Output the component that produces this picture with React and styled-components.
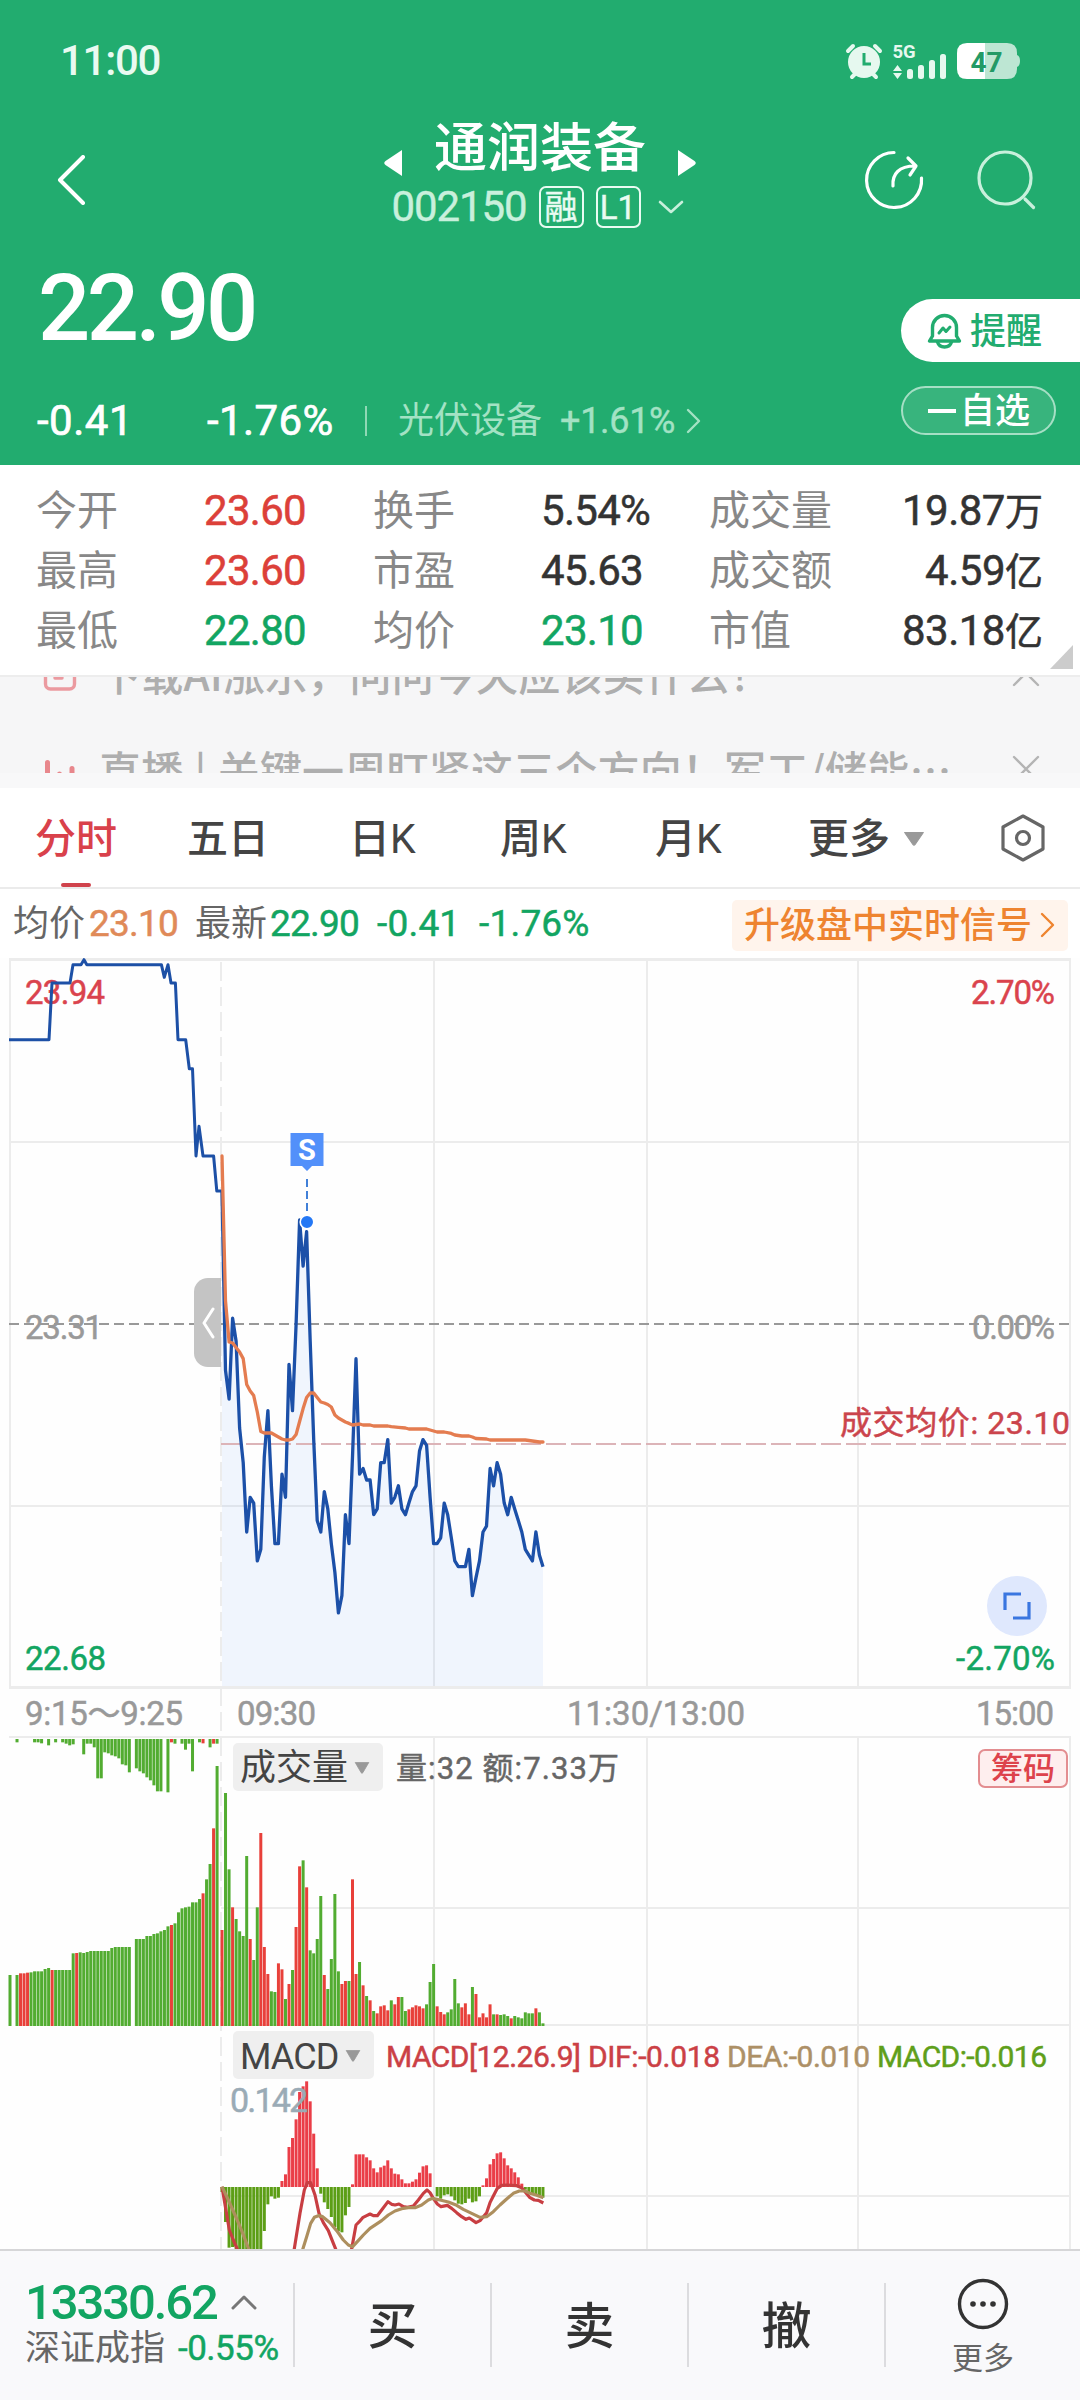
import React from "react";
import styled, { createGlobalStyle } from "styled-components";

const GREEN = "#22ac6f";
const UP = "#dc4039";
const DOWN = "#12a562";
const MINT = "#c8f0dc";

const GlobalStyle = createGlobalStyle`
  * { box-sizing: border-box; }
  body {
    margin: 0;
    background: #fff;
    font-family: Roboto, "Noto Sans CJK SC", sans-serif;
    line-height: 1;
    color: #333;
  }
  svg { display: block; flex: none; }
`;

const Screen = styled.div`
  width: 1080px;
  height: 2400px;
  display: flex;
  flex-direction: column;
  overflow: hidden;
  background: #fff;
`;

const Txt = styled.span`
  display: block;
  flex: none;
  white-space: nowrap;
  font-size: ${(p) => p.$size}px;
  font-weight: ${(p) => p.$weight || 400};
  letter-spacing: ${(p) => p.$ls || 0}px;
  color: ${(p) => p.$color || "inherit"};
  width: ${(p) => (p.$w ? p.$w + "px" : "auto")};
  padding-top: ${(p) => p.$drop || 0}px;
  padding-left: ${(p) => p.$indent || 0}px;
  -webkit-text-stroke: ${(p) => p.$ink || 0}px;
`;

/* ---------- header ---------- */

const Header = styled.header`
  flex: none;
  height: 465px;
  background: ${GREEN};
  color: #fff;
`;

const StatusBar = styled.div`
  height: 117px;
  padding: 5px 59px 0 60px;
  display: flex;
  align-items: center;
  justify-content: space-between;
`;

const StatusIcons = styled.div`
  display: flex;
  align-items: center;
`;

const Nav = styled.nav`
  height: 120px;
  padding: 0 44px 0 57px;
  display: grid;
  grid-template-columns: 200px 1fr 188px;
  align-items: center;
`;

const TitleBlock = styled.div`
  justify-self: center;
  margin-left: -25px;
  display: flex;
  flex-direction: column;
  align-items: center;
`;

const TitleRow = styled.div`
  height: 60px;
  width: 312px;
  padding-top: 4px;
  display: flex;
  align-items: center;
  justify-content: space-between;
`;

const CodeRow = styled.div`
  height: 60px;
  margin-left: -5px;
  display: flex;
  align-items: center;
`;

const Tag = styled.span`
  width: 45px;
  height: 42px;
  margin-left: ${(p) => p.$gap}px;
  border: 2px solid #e9fbf2;
  border-radius: 7px;
  display: flex;
  align-items: center;
  justify-content: center;
  font-size: ${(p) => p.$size}px;
  color: #e9fbf2;
  -webkit-text-stroke: 0.4px;
`;

const NavActions = styled.div`
  display: flex;
  justify-content: space-between;
  padding: 6px 0 0 16px;
`;

const Quote = styled.div`
  height: 228px;
  display: flex;
  justify-content: space-between;
`;

const QuoteLeft = styled.div`
  padding-left: 37px;
`;

const PriceRow = styled.div`
  height: 140px;
  padding-top: 4px;
  display: flex;
  align-items: center;
`;

const ChangeRow = styled.div`
  height: 86px;
  padding-top: 1px;
  display: flex;
  align-items: center;
`;

const Divider = styled.i`
  width: 2px;
  height: ${(p) => p.$h}px;
  background: ${(p) => p.$color};
`;

const QuoteRight = styled.div`
  width: 179px;
  padding-top: 62px;
`;

const AlertButton = styled.button`
  width: 179px;
  height: 63px;
  padding: 0 0 0 26px;
  border: 0;
  border-radius: 32px 0 0 32px;
  background: #fff;
  color: ${GREEN};
  font: inherit;
  display: flex;
  align-items: center;
  gap: 8px;
`;

const WatchButton = styled.button`
  width: 155px;
  height: 49px;
  margin-top: 24px;
  padding: 0 0 0 25px;
  border: 2px solid #a6dfc5;
  border-radius: 25px;
  background: #38b47d;
  color: #fff;
  font: inherit;
  display: flex;
  align-items: center;
  gap: 4px;
`;

const Minus = styled.i`
  width: 28px;
  height: 4px;
  background: #fff;
`;

/* ---------- stats ---------- */

const Stats = styled.section`
  flex: none;
  height: 210px;
  padding: 16px 0 0 36px;
  display: grid;
  grid-template-columns: 168px 169px 168px 168px 168px 166px;
  grid-template-rows: repeat(3, 60px);
  align-items: center;
`;

const StatLabel = styled.span`
  font-size: 41px;
  color: #888;
`;

const StatValue = styled.span`
  font-size: 42px;
  letter-spacing: ${(p) => (p.$right ? -0.5 : -0.7)}px;
  color: ${(p) => p.$color || "#333"};
  text-align: ${(p) => (p.$right ? "right" : "left")};
  -webkit-text-stroke: 0.5px;
  em { font-style: normal; font-size: 38px; letter-spacing: 0; }
`;

const CornerFold = styled.i`
  position: absolute;
  left: 1050px;
  top: 645px;
  border-left: 23px solid transparent;
  border-bottom: 24px solid #ccc;
`;

/* ---------- news ticker ---------- */

const News = styled.section`
  flex: none;
  height: 113px;
  background: #f8f8f9;
  border-top: 2px solid #ededed;
`;

const NewsClip = styled.div`
  height: 96px;
  overflow: hidden;
  background: #f6f6f7;
`;

const NewsRow = styled.div`
  height: 96px;
  margin-top: ${(p) => p.$shift || 0}px;
  padding: 0 40px 0 42px;
  display: flex;
  align-items: center;
  justify-content: space-between;
`;

const NewsText = styled.span`
  flex: 1;
  padding-left: 21px;
  font-family: "Noto Sans CJK SC", sans-serif;
  font-size: 42px;
  font-weight: 500;
  letter-spacing: 0.2px;
  word-spacing: 1.5px;
  color: #aeaeae;
  white-space: nowrap;
`;

/* ---------- tabs ---------- */

const Tabs = styled.nav`
  flex: none;
  height: 101px;
  padding: 0 33px 0 35px;
  border-bottom: 2px solid #ebebeb;
  display: flex;
`;

const Tab = styled.a`
  width: ${(p) => p.$w}px;
  height: 99px;
  padding-top: 3px;
  font-size: 41px;
  font-weight: 450;
  color: ${(p) => (p.$active ? "#d9414b" : "#444")};
  display: flex;
  align-items: center;
  gap: 13px;
`;

const ActiveTab = styled(Tab)`
  flex-direction: column;
  align-items: flex-start;
  justify-content: space-between;
  padding: 31px 0 0;
  gap: 0;
`;

const SettingsTab = styled(Tab)`
  padding: 0;
`;

const Underline = styled.i`
  width: 30px;
  height: 4px;
  margin-left: 26px;
  border-radius: 2px;
  background: #d0434c;
`;

/* ---------- legend ---------- */

const Legend = styled.div`
  flex: none;
  height: 69px;
  padding: 0 12px 0 13px;
  display: flex;
  align-items: center;
`;

const Upgrade = styled.button`
  width: 336px;
  height: 51px;
  margin: 3px 0 0 auto;
  padding: 0 12px 0 12px;
  border: 0;
  border-radius: 5px;
  background: #fff4ec;
  color: #ee8430;
  font: inherit;
  display: flex;
  align-items: center;
  justify-content: space-between;
`;

/* ---------- charts ---------- */

const Charts = styled.section`
  flex: none;
  position: relative;
  height: 1291px;
  overflow: hidden;
  background: #fefefe;
`;

const Overlay = styled.div`
  position: absolute;
  left: ${(p) => p.$x}px;
  top: ${(p) => p.$y}px;
`;

const Chip = styled(Overlay)`
  width: ${(p) => p.$w}px;
  height: 48px;
  padding: 1px 13px 0 7px;
  border-radius: 5px;
  background: #efefef;
  color: #444;
  display: flex;
  align-items: center;
  justify-content: space-between;
`;

const CostTag = styled(Overlay)`
  width: 90px;
  height: 39px;
  border: 2px solid #e38d90;
  border-radius: 7px;
  background: #feeeee;
  color: #dd424b;
  display: flex;
  align-items: center;
  justify-content: center;
`;

const Collapse = styled(Overlay)`
  width: 27px;
  height: 89px;
  border-radius: 14px 0 0 14px;
  background: #c4c4c4;
  display: flex;
  align-items: center;
  justify-content: center;
`;

const Expand = styled(Overlay)`
  width: 60px;
  height: 60px;
  border-radius: 50%;
  background: #dfe8fd;
  display: flex;
  align-items: center;
  justify-content: center;
`;

/* ---------- bottom bar ---------- */

const Bottom = styled.footer`
  flex: none;
  height: 151px;
  border-top: 2px solid #d6d6d8;
  background: #f9f9fb;
  display: flex;
`;

const IndexBox = styled.div`
  width: 293px;
  padding: 30px 0 0 25px;
`;

const IndexRow = styled.div`
  display: flex;
  align-items: center;
  height: ${(p) => p.$h}px;
`;

const Action = styled.div`
  width: 197px;
  height: 84px;
  margin-top: 32px;
  padding-top: 4px;
  border-left: 2px solid #dcdcdf;
  font-size: 50px;
  font-weight: 500;
  color: #333;
  display: flex;
  align-items: center;
  justify-content: center;
`;

const More = styled(Action)`
  flex: 1;
  padding: 2px 0 0;
  font-weight: 400;
  flex-direction: column;
  gap: 13px;
`;

/* ---------- data ---------- */

const STEP = 3.527;
const OPEN_X = 222;

// Ticks (0.01) away from the previous close, one per minute.
const PRICE = [
  23, -8, -13, 1, -3, -18, -24, -36, -30, -31, -41, -39, -23, -15, -28, -38, -38, -26, -30, -7,
  -15, 0, 18, 10, 16, -3, -20, -34, -36, -29, -32, -38, -43, -50, -47, -33, -38, -23, -6, -26,
  -25, -27, -27, -33, -32, -24, -24, -20, -31, -30, -28, -32, -33, -31, -29, -28, -22, -20, -21,
  -30, -38, -38, -37, -31, -33, -37, -41, -42, -42, -42, -39, -47, -44, -41, -36, -35, -25, -28,
  -24, -26, -31, -33, -30, -32, -34, -36, -39, -40, -41, -36, -40, -42,
];

// [minute, y] of the running average.
const AVERAGE = [
  [0, 1156], [1, 1301], [2, 1342], [3, 1343], [4, 1347.5], [5, 1352], [6, 1358.6], [7, 1384.5],
  [8, 1391], [9, 1395.6], [10, 1412], [11, 1431.5], [12, 1433], [14, 1433], [15, 1435], [16, 1437],
  [17, 1439], [18, 1440], [19, 1440], [20, 1439], [21, 1434.5], [22, 1421.5], [23, 1408.6],
  [24, 1397.5], [25, 1393], [26, 1393], [27, 1397.5], [28, 1402], [29, 1403], [30, 1404.5],
  [31, 1407], [32, 1415], [33, 1418], [34, 1420], [35, 1422], [36, 1423.4], [37, 1425], [39, 1424],
  [40, 1425], [42, 1425], [43, 1426], [47, 1426], [48, 1426.7], [50, 1427.4], [52, 1428], [53, 1429],
  [58, 1429], [59, 1430], [60, 1431], [61, 1432], [63, 1432], [65, 1433.4], [66, 1435], [68, 1436],
  [70, 1436], [71, 1437], [72, 1438.5], [75, 1439], [76, 1440], [86, 1440], [88, 1441], [90, 1442],
  [91, 1442],
];

const AUCTION =
  "9,1039.7 49,1039.7 52,983 70,983 73,964.7 81,964.7 84,959.7 86.8,964.7 161.4,964.7 164.3,977.3 168,964.7 171,983 175.4,983 178,1039.7 185.7,1039.7 189.3,1068.7 192.5,1068.7 196,1156 199,1126.3 203,1156 213.6,1156 216.8,1191 222,1191";

// Bar strings: "r" rising, "g" falling, followed by the size; "-" is an empty slot.
const AUCTION_VOLUME =
  "g153 - g153 r158 r158 r160 g161 g164 g164 g164 g171 g174 r168 g168 g168 g168 g168 g168 g218 r219 g221 g219 g222 g225 g225 g225 g225 g225 g225 g234 g237 g237 g237 g237 g237 - g261 g261 g261 g270 g270 g276 g278 g284 g288 g299 r303 g308 g341 g353 g356 g358 g371 g371 g381 r398 g440 g486 r593 g780";

const AUCTION_UNMATCHED =
  "- - g10 - - - - g10 g10 g13 - g19 - g10 - g10 g14 g19 g16 - - g46 g14 g14 g25 g118 g118 g40 g43 g49 g52 g58 g76 g79 g100 - g88 g97 g103 g115 g124 g139 g157 g157 - g160 r10 g14 - g14 g32 g14 g97 - g10 r13 - g25 r14 g14";

const VOLUME =
  "r288 g699 g470 r356 g321 g284 g270 g510 r261 g198 g356 r579 r237 r156 g104 g102 r188 r170 g81 r126 g168 r297 r479 g497 r416 g227 g218 g261 g390 r153 g111 g201 g396 g164 r126 r135 g135 r440 r156 g192 r122 g90 r77 g45 r38 r59 r62 r47 g77 r65 r87 g87 g45 r50 r56 r62 r59 r53 g65 g132 g186 r59 r42 r35 g41 g50 g141 g68 r56 r68 r35 g117 r96 r26 r38 r26 r65 g35 r35 g33 g35 g30 r23 g30 g26 g23 g41 g38 g38 r53 g41 g8";

const MACD =
  "g15 g105 g182 g180 g210 g210 g210 g210 g210 g210 g210 g210 g132 g52 g28 g35 g32 r18 r38 r120 r147 r203 r285 r302 r317 r257 r160 r56 g20 g46 g66 g90 g120 g133 g136 g85 g60 r8 r98 r98 r98 r89 r80 r56 r44 r59 r64 r80 r56 r40 r38 r23 r11 r11 r16 r23 r43 r62 r65 r41 - g28 g35 g25 g22 g28 g40 g50 g52 g48 g35 g46 g43 g28 r5 r26 r68 r84 r101 r104 r86 r65 r56 r44 r29 r10 g8 g15 g21 g21 g25 g32";

const DIF = [
  "66,500 88,630 100,660 114,692",
  "282,692 300,580 313,510 322,488 332,488 345,525 357,580 370,608 385,632 398,665 409,692",
  "454,692 468,615 478,605 488,593 500,587 510,582 520,587 532,587 545,570 564,545 575,553 585,555 597,552 610,560 622,562 640,558 655,540 670,520 681,510 690,518 700,535 712,552 723,560 742,556 755,565 770,578 785,590 798,598 808,594 828,608 840,602 860,578 870,548 880,528 892,505 905,496 920,495 935,496 950,497 965,503 975,515 990,533 1003,540 1015,541 1030,549",
];

const DEA = [
  "66,500 85,540 105,585 125,632 148,692",
  "307,692 320,650 332,610 343,592 355,587 368,590 390,608 410,632 430,660 445,675 458,680 472,665 490,645 510,625 545,602 565,585 585,573 605,566 625,563 645,563 665,555 685,540 698,535 720,540 745,546 770,556 790,568 815,580 840,592 860,590 880,575 900,555 920,537 940,520 958,513 975,513 990,520 1010,526 1030,533",
];

const BAR = { r: "#e8403a", g: "#52ac31" };
const MACD_BAR = { r: "#ea3e48", g: "#5c9e16" };

const parseBars = (text) =>
  text.split(" ").map((t, i) => (t === "-" ? null : { i, kind: t[0], size: Number(t.slice(1)) / 3 })).filter(Boolean);

const priceY = (tick) => 1324 - tick * 5.778;
const minuteX = (m) => OPEN_X + m * STEP;
const pricePoints = PRICE.map((t, m) => `${minuteX(m).toFixed(1)},${priceY(t).toFixed(1)}`).join(" ");
const averagePoints = AVERAGE.map(([m, y]) => `${minuteX(m).toFixed(1)},${y}`).join(" ");

/* ---------- chart parts ---------- */

const Bars = ({ data, x, step, base, down, palette = BAR }) =>
  parseBars(data).map(({ i, kind, size }) => {
    const fall = down === "mixed" ? kind === "g" : down;
    return (
      <rect
        key={i}
        x={x + i * step - 1.5}
        y={fall ? base : base - size}
        width="3"
        height={size}
        fill={palette[kind]}
      />
    );
  });

const Label = ({ x, y, w, size = 33, color, children }) => (
  <text x={x} y={y} textLength={w} lengthAdjust="spacing" fontSize={size} fill={color} stroke={color} strokeWidth="0.5">
    {children}
  </text>
);

const ChartArt = () => (
  <svg width="1080" height="1291" viewBox="0 958 1080 1291">
    <g stroke="#ececec" strokeWidth="2" fill="none">
      <path d="M10 959V1688M434 959V1688M647 959V1688M858 959V1688M1070 959V1688" />
      <path d="M434 1737V2249M647 1737V2249M858 1737V2249M1070 1737V2249" />
      <path d="M9 1142H1071M9 1506H1071M9 1737H1071M221 1908H1071M221 2025H1071M221 2196H1071" />
      <path d="M9 959.5H1071M9 1687.5H1071" strokeWidth="3" />
      <path d="M221 962V2249" strokeDasharray="19 6" />
    </g>

    <g fontFamily='Roboto, "Noto Sans CJK SC", sans-serif'>
      <Label x={25} y={1004} w={80} color="#da434d">23.94</Label>
      <Label x={971} y={1004} w={84} color="#da434d">2.70%</Label>
      <Label x={25} y={1339} w={78} color="#999">23.31</Label>
      <Label x={972} y={1339} w={83} color="#999">0.00%</Label>
      <Label x={25} y={1670} w={81} color={DOWN}>22.68</Label>
      <Label x={956} y={1670} w={99} color={DOWN}>-2.70%</Label>
      <Label x={25} y={1725} w={158} color="#999">9:15～9:25</Label>
      <Label x={237} y={1725} w={79} color="#999">09:30</Label>
      <Label x={567} y={1725} w={178} color="#999">11:30/13:00</Label>
      <Label x={976} y={1725} w={78} color="#999">15:00</Label>
    </g>

    <polygon points={`${pricePoints} ${minuteX(91)},1686 ${OPEN_X},1686`} fill="#4a86f0" fillOpacity="0.078" />
    <path d="M9 1324H1071" stroke="#999" strokeWidth="2" strokeDasharray="10 5" />
    <path d="M221 1444H1071" stroke="#dcb4b8" strokeWidth="2" strokeDasharray="20 5" />
    <polyline points={AUCTION} fill="none" stroke="#1d50a6" strokeWidth="3" strokeLinejoin="round" />
    <polyline points={pricePoints} fill="none" stroke="#1c50a8" strokeWidth="3.3" strokeLinejoin="round" />
    <polyline points={averagePoints} fill="none" stroke="#e47c50" strokeWidth="3.3" strokeLinejoin="round" strokeLinecap="round" />

    <path d="M307 1179V1215" stroke="#4180d8" strokeWidth="2" strokeDasharray="8 4" />
    <circle cx="307" cy="1222" r="6.8" fill="#2478f5" stroke="#fff" strokeWidth="1.6" />
    <path d="M290.5 1133H323.5V1166H312L307 1171L302 1166H290.5Z" fill="#5290fa" />
    <g fontFamily='Roboto, "Noto Sans CJK SC", sans-serif'>
      <text x="307" y="1160" textAnchor="middle" fontSize="29" fontWeight="700" fill="#fff">S</text>
      <Label x={840} y={1434} w={230} size={32} color="#cb444c">成交均价: 23.10</Label>
    </g>

    <Bars data={AUCTION_VOLUME} x={10} step={3.51} base={2026} />
    <Bars data={AUCTION_UNMATCHED} x={10} step={3.51} base={1739} down />
    <Bars data={VOLUME} x={OPEN_X} step={STEP} base={2026} />
    <Bars data={MACD} x={OPEN_X} step={STEP} base={2187} down="mixed" palette={MACD_BAR} />

    <g transform="translate(200 2020) scale(0.33333)" fill="none" strokeWidth="9.5" strokeLinejoin="round">
      {DIF.map((d) => <polyline key={d} points={d} stroke="#c83e42" />)}
      {DEA.map((d) => <polyline key={d} points={d} stroke="#ad8f5e" />)}
    </g>

    <g fontFamily='Roboto, "Noto Sans CJK SC", sans-serif'>
      <Label x={396} y={1779} w={223} size={31} color="#666">量:32 额:7.33万</Label>
      <Label x={386} y={2067} w={195} size={30} color="#cb4045">MACD[12.26.9]</Label>
      <Label x={588} y={2067} w={132} size={30} color="#cb4045">DIF:-0.018</Label>
      <Label x={727} y={2067} w={143} size={30} color="#ad9066">DEA:-0.010</Label>
      <Label x={877} y={2067} w={170} size={30} color="#5f9f1a">MACD:-0.016</Label>
      <Label x={230} y={2112} w={78} size={34} color="#9aabb6">0.142</Label>
    </g>
  </svg>
);

/* ---------- icons ---------- */

const Icon = styled.svg`
  margin-top: ${(p) => p.$top || 0}px;
  margin-left: ${(p) => p.$left || 0}px;
`;

const Chevron = ({ w, h, d, sw = 3, color = "currentColor", top, left }) => (
  <Icon width={w} height={h} viewBox={`0 0 ${w} ${h}`} $top={top} $left={left}>
    <path d={d} fill="none" stroke={color} strokeWidth={sw} strokeLinecap="round" strokeLinejoin="round" />
  </Icon>
);

const Caret = ({ w, h, color = "#999" }) => (
  <svg width={w} height={h} viewBox="0 0 20 14" preserveAspectRatio="none">
    <path d="M1.5 0.5H18.5L11 12.5Q10 14 9 12.5Z" fill={color} stroke={color} strokeLinejoin="round" />
  </svg>
);

const StatusArt = () => (
  <svg width="176" height="38" viewBox="845 42 176 38">
    <g fill="none" stroke="#e6f8ef" strokeWidth="4" strokeLinecap="round">
      <path d="M848 51L853 46M880 51L875 46M852 77L856 73M876 77L872 73" />
    </g>
    <circle cx="864" cy="62" r="16" fill="#e6f8ef" />
    <path d="M864 53V64H871" fill="none" stroke={GREEN} strokeWidth="3" />
    <text x="892.5" y="57.5" fontSize="18.5" fontWeight="700" fill="#e6f8ef" fontFamily="Roboto, sans-serif">5G</text>
    <path d="M897.5 65L902 71H893ZM897.5 79L902 73H893Z" fill="#e6f8ef" />
    <g fill="#e6f8ef">
      <rect x="907" y="69" width="6" height="10" rx="2.5" />
      <rect x="918" y="65" width="6" height="14" rx="2.5" />
      <rect x="929" y="60" width="6" height="19" rx="2.5" />
      <rect x="940" y="54" width="6" height="25" rx="2.5" />
    </g>
    <path d="M967 43H985V79H967Q957 79 957 69V53Q957 43 967 43Z" fill="#fff" />
    <path d="M985 43H1007Q1017 43 1017 53V55Q1020 56 1020 61Q1020 66 1017 67V69Q1017 79 1007 79H985Z" fill="#bde6d3" />
    <text x="986.5" y="71.5" fontSize="28" fontWeight="700" fill="#239a66" textAnchor="middle" fontFamily="Roboto, sans-serif">47</text>
  </svg>
);

const ShareIcon = () => (
  <svg width="60" height="60" viewBox="0 0 60 60" fill="none" stroke="#fff" strokeWidth="3.2" strokeLinecap="round" strokeLinejoin="round">
    <path d="M30 2.5A27.5 27.5 0 1 0 57.5 28" />
    <path d="M29 36C28 24 35 16 51 16M44 8L52 16L46 25" />
  </svg>
);

const SearchIcon = () => (
  <svg width="60" height="60" viewBox="0 0 60 60" fill="none" stroke={MINT} strokeWidth="3.2" strokeLinecap="round">
    <circle cx="29" cy="28" r="26" />
    <path d="M49 49L57.5 57.5" />
  </svg>
);

const BellIcon = () => (
  <svg width="35" height="36" viewBox="0 0 35 36" fill="none" stroke={GREEN} strokeWidth="3.4" strokeLinecap="round" strokeLinejoin="round">
    <path d="M2.5 28H32.5L29.5 23V14.5A12 12 0 0 0 5.5 14.5V23Z" />
    <path d="M10.5 29Q12 34 17.5 34Q23 34 24.5 29" />
    <path d="M12 20L16 15L19 18.5L23 14" strokeWidth="3" />
  </svg>
);

const CloseIcon = () => <Chevron w={28} h={28} d="M2 2L26 26M26 2L2 26" sw={2.4} color="#b4b4b4" />;

const stats = [
  ["今开", "23.60", "", UP], ["换手", "5.54%", ""], ["成交量", "19.87", "万"],
  ["最高", "23.60", "", UP], ["市盈", "45.63", ""], ["成交额", "4.59", "亿"],
  ["最低", "22.80", "", DOWN], ["均价", "23.10", "", DOWN], ["市值", "83.18", "亿"],
];

export default function App() {
  return (
    <Screen>
      <GlobalStyle />
      <Header>
        <StatusBar>
          <Txt $size={42} $weight={500} $ls={-1.3} $color="#e9faf1">11:00</Txt>
          <StatusIcons><StatusArt /></StatusIcons>
        </StatusBar>
        <Nav>
          <Chevron w={30} h={50} d="M26 2L3 25L26 48" sw={4} top={6} />
          <TitleBlock>
            <TitleRow>
              <Icon width="18" height="26" viewBox="0 0 18 26" $top={28}>
                <path d="M18 0V26L1.5 15Q-1 13 1.5 11Z" fill="#fff" />
              </Icon>
              <Txt $size={53} $weight={500}>通润装备</Txt>
              <Icon width="18" height="26" viewBox="0 0 18 26" $top={28}>
                <path d="M0 0V26L16.5 15Q19 13 16.5 11Z" fill="#fff" />
              </Icon>
            </TitleRow>
            <CodeRow>
              <Txt $size={42} $ls={-1.1} $color={MINT} $w={134} $ink={0.4}>002150</Txt>
              <Tag $gap={13} $size={33}>融</Tag>
              <Tag $gap={12} $size={33}>L1</Tag>
              <Chevron w={26} h={14} d="M2 2L13 12L24 2" sw={2.6} color={MINT} left={17} />
            </CodeRow>
          </TitleBlock>
          <NavActions>
            <ShareIcon />
            <SearchIcon />
          </NavActions>
        </Nav>
        <Quote>
          <QuoteLeft>
            <PriceRow><Txt $size={92} $weight={500} $ls={-3.6} $indent={1}>22.90</Txt></PriceRow>
            <ChangeRow>
              <Txt $size={42} $w={170} $ls={0.5} $ink={0.7}>-0.41</Txt>
              <Txt $size={42} $w={158} $ls={0.4} $ink={0.7}>-1.76%</Txt>
              <Divider $h={30} $color="#8fd8b5" />
              <Txt $size={36} $color="#a3e2c4" $indent={31} $w={193} $drop={1}>光伏设备</Txt>
              <Txt $size={36} $color="#a3e2c4" $w={126} $ls={-0.3} $ink={0.4}>+1.61%</Txt>
              <Chevron w={16} h={26} d="M2 2L13 13L2 24" sw={2.4} color="#a3e2c4" />
            </ChangeRow>
          </QuoteLeft>
          <QuoteRight>
            <AlertButton><BellIcon /><Txt $size={36} $weight={500} $drop={2}>提醒</Txt></AlertButton>
            <WatchButton><Minus /><Txt $size={35} $weight={500} $drop={2}>自选</Txt></WatchButton>
          </QuoteRight>
        </Quote>
      </Header>

      <Stats>
        {stats.map(([label, value, unit, color], i) => (
          <React.Fragment key={label}>
            <StatLabel>{label}</StatLabel>
            <StatValue $color={color} $right={i % 3 === 2}>{value}{unit && <em>{unit}</em>}</StatValue>
          </React.Fragment>
        ))}
      </Stats>
      <CornerFold />

      <News>
        <NewsClip>
          <NewsRow $shift={-52}>
            <svg width="36" height="36" viewBox="0 0 36 36" fill="none" stroke="#eb9aa0" strokeWidth="3.4" strokeLinecap="round">
              <rect x="3.5" y="2" width="29" height="32" rx="5" />
              <path d="M13 23H20M13 13H23" />
            </svg>
            <NewsText>下载AI涨乐，问问今天应该买什么！</NewsText>
            <CloseIcon />
          </NewsRow>
          <NewsRow>
            <svg width="36" height="36" viewBox="0 0 36 36" fill="none" stroke="#e8878c" strokeWidth="5" strokeLinecap="round">
              <path d="M5.5 11.5V32M17.5 23V32M30 17.5V32" />
            </svg>
            <NewsText>直播 | 关键一周盯紧这三个方向！军工/储能…</NewsText>
            <CloseIcon />
          </NewsRow>
        </NewsClip>
      </News>

      <Tabs>
        <ActiveTab $w={152} $active>分时<Underline /></ActiveTab>
        <Tab $w={162}>五日</Tab>
        <Tab $w={151}>日K</Tab>
        <Tab $w={155}>周K</Tab>
        <Tab $w={153}>月K</Tab>
        <Tab $w={191}>更多<Caret w={22} h={14} /></Tab>
        <SettingsTab $w={48}>
          <svg width="48" height="48" viewBox="0 0 48 48" fill="none" stroke="#666" strokeWidth="3.2" strokeLinejoin="round">
            <path d="M24 2L44 13V35L24 46L4 35V13Z" />
            <circle cx="24" cy="24" r="6.5" />
          </svg>
        </SettingsTab>
      </Tabs>

      <Legend>
        <Txt $size={36} $color="#666" $w={76}>均价</Txt>
        <Txt $size={37} $color="#e08a58" $w={106} $ls={-0.8} $ink={0.5}>23.10</Txt>
        <Txt $size={36} $color="#666" $w={75}>最新</Txt>
        <Txt $size={37} $color={DOWN} $w={107} $ls={-0.8} $ink={0.5}>22.90</Txt>
        <Txt $size={37} $color={DOWN} $w={102} $ls={0.2} $ink={0.5}>-0.41</Txt>
        <Txt $size={37} $color={DOWN} $ls={0.2} $ink={0.5}>-1.76%</Txt>
        <Upgrade>
          <Txt $size={36} $weight={500} $drop={1}>升级盘中实时信号</Txt>
          <Chevron w={16} h={26} d="M2 2L13 13L2 24" sw={2.4} />
        </Upgrade>
      </Legend>

      <Charts>
        <ChartArt />
        <Collapse $x={194} $y={320}>
          <Chevron w={14} h={32} d="M12 2L3 16L12 30" sw={3} color="#fff" />
        </Collapse>
        <Expand $x={987} $y={618}>
          <svg width="28" height="28" viewBox="0 0 28 28" fill="none" stroke="#3a76e0" strokeWidth="3.2">
            <path d="M2 18V2H18M26 10V26H10" />
          </svg>
        </Expand>
        <Chip $x={233} $y={785} $w={150}>
          <Txt $size={36} $drop={1}>成交量</Txt>
          <Caret w={16} h={12} />
        </Chip>
        <CostTag $x={978} $y={791}><Txt $size={32} $weight={450}>筹码</Txt></CostTag>
        <Chip $x={233} $y={1073} $w={141}>
          <Txt $size={36} $ls={-0.9} $drop={2}>MACD</Txt>
          <Caret w={16} h={12} />
        </Chip>
      </Charts>

      <Bottom>
        <IndexBox>
          <IndexRow $h={42}>
            <Txt $size={49} $weight={500} $color={DOWN} $ls={-2.1} $w={206}>13330.62</Txt>
            <Chevron w={26} h={15} d="M2 13L13 2L24 13" color="#777" />
          </IndexRow>
          <IndexRow $h={50}>
            <Txt $size={35} $color="#666" $w={153}>深证成指</Txt>
            <Txt $size={35} $color={DOWN} $ls={-0.5} $ink={0.5}>-0.55%</Txt>
          </IndexRow>
        </IndexBox>
        <Action>买</Action>
        <Action>卖</Action>
        <Action>撤</Action>
        <More>
          <svg width="52" height="52" viewBox="0 0 52 52">
            <circle cx="26" cy="26" r="23.5" fill="none" stroke="#333" strokeWidth="3.4" />
            <circle cx="16" cy="26" r="2.8" fill="#333" />
            <circle cx="26" cy="26" r="2.8" fill="#333" />
            <circle cx="36" cy="26" r="2.8" fill="#333" />
          </svg>
          <Txt $size={31} $color="#666">更多</Txt>
        </More>
      </Bottom>
    </Screen>
  );
}
